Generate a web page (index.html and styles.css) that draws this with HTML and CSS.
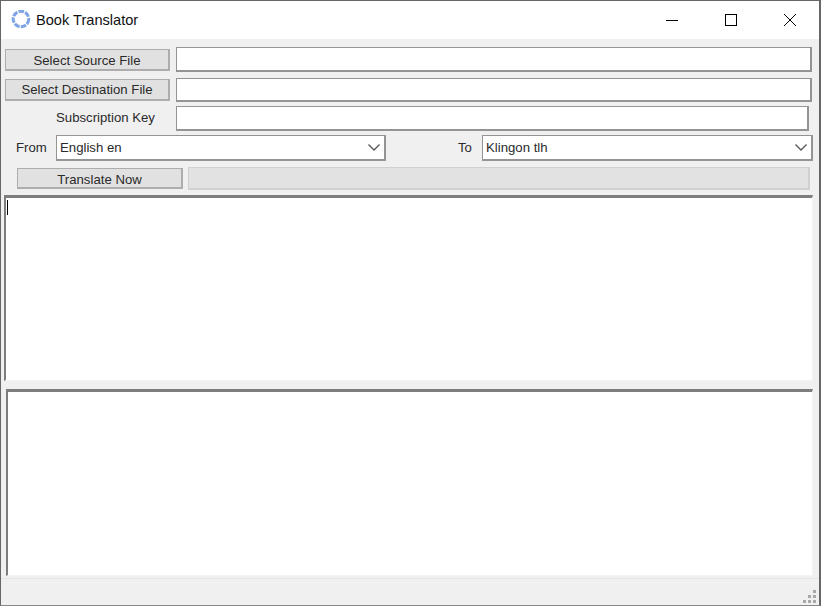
FILE: index.html
```html
<!DOCTYPE html>
<html lang="en">
<head>
<meta charset="utf-8">
<title>Book Translator</title>
<link rel="stylesheet" href="styles.css">
</head>
<body>
<div class="window">
  <header class="titlebar">
    <svg class="app-icon" width="20" height="20" viewBox="0 0 20 20"><circle cx="10" cy="9" r="7.8" fill="none" stroke="#7fa4e6" stroke-width="3" stroke-dasharray="5.6 1.2"/></svg>
    <span class="title">Book Translator</span>
    <div class="controls">
      <svg class="ctl" width="12" height="12" viewBox="0 0 12 12"><path d="M0 6.5H12" stroke="#000" fill="none"/></svg>
      <svg class="ctl" width="12" height="12" viewBox="0 0 12 12"><rect x="0.5" y="0.5" width="11" height="11" stroke="#000" fill="none"/></svg>
      <svg class="ctl" width="12" height="12" viewBox="0 0 12 12"><path d="M0 0L12 12M12 0L0 12" stroke="#000" fill="none"/></svg>
    </div>
  </header>
  <main class="content">
    <div class="row row-source">
      <button class="btn btn-file btn-source">Select Source File</button>
      <div class="field field-wide"></div>
    </div>
    <div class="row row-dest">
      <button class="btn btn-file">Select Destination File</button>
      <div class="field field-wide"></div>
    </div>
    <div class="row row-key">
      <label class="label label-key">Subscription Key</label>
      <div class="field field-key"></div>
    </div>
    <div class="row row-lang">
      <label class="label label-from">From</label>
      <div class="combo combo-from"><span>English en</span><svg width="12" height="7" viewBox="0 0 12 7"><path d="M0.5 0.5L6 6L11.5 0.5" stroke="#555" stroke-width="1.3" fill="none"/></svg></div>
      <label class="label label-to">To</label>
      <div class="combo combo-to"><span>Klingon tlh</span><svg width="12" height="7" viewBox="0 0 12 7"><path d="M0.5 0.5L6 6L11.5 0.5" stroke="#555" stroke-width="1.3" fill="none"/></svg></div>
    </div>
    <div class="row row-action">
      <button class="btn btn-go">Translate Now</button>
      <div class="progress"></div>
    </div>
    <div class="memo memo-top"><i class="caret"></i></div>
    <div class="memo memo-bottom"></div>
  </main>
  <footer class="status">
    <svg width="14" height="13" viewBox="0 0 14 13" fill="#a8a8a8"><rect x="10" y="0" width="3" height="3"/><rect x="5" y="5" width="3" height="3"/><rect x="10" y="5" width="3" height="3"/><rect x="0" y="10" width="3" height="3"/><rect x="5" y="10" width="3" height="3"/><rect x="10" y="10" width="3" height="3"/></svg>
  </footer>
</div>
</body>
</html>
```
FILE: styles.css
```css
* { box-sizing: border-box; }
html, body { margin: 0; height: 100%; overflow: hidden; }
body { font: 13.2px "Liberation Sans", Arial, sans-serif; color: #2a2a2a; }
.window {
  width: 821px; height: 606px;
  display: flex; flex-direction: column;
  background: #f0f0f0;
  border: 1px solid #666;
  border-width: 1px 2px 1px 1px;
  border-bottom-color: #888;
}
.titlebar { height: 38px; background: #fff; display: flex; align-items: center; padding-left: 10px; flex: none; }
.title { margin-left: 5px; font-size: 14.6px; color: #111; }
.controls { margin-left: auto; display: flex; gap: 47px; padding-right: 23px; }
.ctl { display: block; }
.content { flex: 1; display: flex; flex-direction: column; }
.row { display: flex; align-items: center; }
.btn {
  font: inherit; color: #2a2a2a; padding: 0;
  background: #e1e1e1; border: 2px solid #adadad; border-width: 1px 2px 2px 1px;
  display: block;
}
.btn-file { width: 165px; height: 22px; margin-right: 6px; }
.btn-source { padding-top: 2px; }
.field, .combo { background: #fff; border: 1px solid #949494; border-width: 1px 2px 2px 1px; }
.row-source { margin-top: 8px; padding-left: 4px; height: 25px; }
.row-dest { margin-top: 6px; padding-left: 4px; height: 24px; }
.row-key { margin-top: 4px; height: 25px; }
.row-lang { margin-top: 4px; height: 26px; }
.row-action { margin-top: 6px; height: 23px; }
.field-wide { width: 636px; height: 100%; }
.label-key { margin-left: 55px; width: 120px; margin-top: -3px; }
.field-key { width: 633px; height: 100%; }
.label-from { margin-left: 15px; width: 40px; margin-top: -2px; }
.combo { height: 100%; display: flex; align-items: center; justify-content: space-between; padding: 0 4px 0 3px; }
.combo svg { flex: none; }
.combo-from { width: 330px; }
.label-to { margin-left: 72px; width: 24px; margin-top: -2px; }
.combo-to { width: 331px; }
.btn-go { margin-left: 16px; width: 166px; height: 21px; padding-top: 3px; }
.progress { margin-left: 5px; width: 622px; height: 23px; background: #e2e2e2; border: 1px solid #d0d0d0; border-width: 1px 2px 2px 1px; }
.memo { background: #fff; border: 1px solid #f4f4f4; border-top: 3px solid #7d7d7d; border-left: 2px solid #7d7d7d; position: relative; }
.memo-top { margin: 5px 0 0 3px; width: 809px; height: 186px; }
.memo-bottom { margin: 8px 0 0 5px; width: 807px; height: 187px; }
.caret { position: absolute; left: 1px; top: 2px; width: 1px; height: 15px; background: #000; }
.status { height: 29px; flex: none; border-top: 1px solid #e4e4e4; margin-top: 2px; display: flex; justify-content: flex-end; align-items: flex-end; padding: 0 2px 4px 0; }
```
